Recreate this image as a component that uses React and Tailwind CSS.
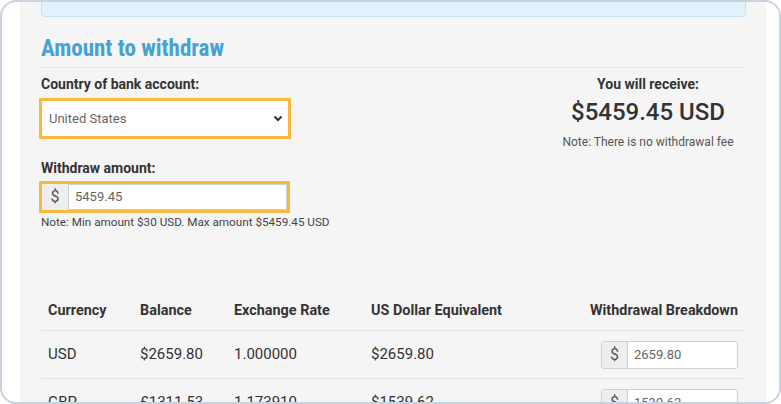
import React from "react";

function MoneyInput({ value, width = "w-[137px]", h = "h-[28px]" }) {
  return (
    <div className={`flex ${width} ${h} rounded-[3px] border border-[#cfcfcf] bg-white overflow-hidden`}>
      <div className="w-[26px] flex items-center justify-center bg-[#eeeeee] border-r border-[#cfcfcf] text-[16px] text-[#555]">$</div>
      <div className="flex-1 flex items-center pl-[6px] text-[13px] text-[#666]">{value}</div>
    </div>
  );
}

export default function App() {
  const rows = [
    ["USD", "$2659.80", "1.000000", "$2659.80", "2659.80"],
    ["GBP", "£1311.53", "1.173910", "$1539.62", "1539.62"],
  ];
  return (
    <div className="w-[781px] h-[404px] bg-white overflow-hidden" style={{ fontFamily: "Roboto, 'Liberation Sans', sans-serif" }}>
      <div className="h-[404px] w-[781px] border-2 border-[#c9d3dd] rounded-[16px] overflow-hidden flex pl-[18px] pr-[13px] bg-white">
        <div className="flex-1 bg-[#f5f5f5] pl-[21px] pr-[20px] flex flex-col">
          <div className="-mt-[28px] h-[43px] shrink-0 rounded-[4px] border border-[#c3e2f4] bg-[#e2f2fc]" />
          <h2
            className="mt-[18px] h-[28px] leading-[28px] text-[23px] font-bold text-[#45a2d3]"
            style={{ fontFamily: "'Roboto Condensed', 'Liberation Sans Narrow', 'DejaVu Sans Condensed', Roboto, sans-serif" }}
          >
            Amount to withdraw
          </h2>
          <div className="mt-[4px] border-t border-[#e8e8e8]" />
          <div className="flex justify-between mt-[6px]">
            <div className="flex flex-col">
              <div className="h-[20px] leading-[20px] text-[14px] font-bold text-[#333]">Country of bank account:</div>
              <div className="mt-[4px] -ml-[2px] w-[252px] h-[41px] border-[3px] border-[#f8b93c] bg-white flex items-center justify-between pl-[7px] pr-[5px]">
                <span className="text-[13px] text-[#666]">United States</span>
                <svg width="10" height="7" viewBox="0 0 10 7"><path d="M1.5 1.5 5 5l3.5-3.5" fill="none" stroke="#333" strokeWidth="2" /></svg>
              </div>
              <div className="mt-[19px] h-[20px] leading-[20px] text-[14px] font-bold text-[#333]">Withdraw amount:</div>
              <div className="mt-[3px] -ml-[2px] w-[251px] h-[32px] border-[3px] border-[#f8b93c] bg-white flex">
                <div className="w-[26px] flex items-center justify-center bg-[#eeeeee] text-[16px] text-[#555]">$</div>
                <div className="flex-1 flex items-center pl-[6px] border border-[#cfcfcf] text-[13px] text-[#666]">5459.45</div>
              </div>
              <div className="mt-[1px] h-[16px] leading-[16px] text-[11.7px] text-[#444]">Note: Min amount $30 USD. Max amount $5459.45 USD</div>
            </div>
            <div className="w-[196px] flex flex-col items-center">
              <div className="h-[20px] leading-[20px] text-[14px] font-bold text-[#333]">You will receive:</div>
              <div className="mt-[3px] h-[30px] leading-[30px] text-[24px] font-medium text-[#333]">$5459.45 USD</div>
              <div className="mt-[7px] h-[16px] leading-[16px] text-[12px] text-[#555]">Note: There is no withdrawal fee</div>
            </div>
          </div>
          <div className="mt-[62px] flex flex-col">
            <div className="grid grid-cols-[92px_94px_137px_1fr_auto] h-[39px] items-center border-b border-[#e4e4e4] text-[14.4px] font-bold text-[#333]">
              <div className="pl-[7px]">Currency</div>
              <div className="pl-[7px]">Balance</div>
              <div className="pl-[7px]">Exchange Rate</div>
              <div className="pl-[7px]">US Dollar Equivalent</div>
              <div className="pr-[8px]">Withdrawal Breakdown</div>
            </div>
            {rows.map((r) => (
              <div key={r[0]} className="grid grid-cols-[92px_94px_137px_1fr_auto] h-[48px] items-center border-b border-[#e4e4e4] text-[15px] text-[#333]">
                <div className="pl-[7px]">{r[0]}</div>
                <div className="pl-[7px]">{r[1]}</div>
                <div className="pl-[7px]">{r[2]}</div>
                <div className="pl-[7px]">{r[3]}</div>
                <div className="pr-[8px]"><MoneyInput value={r[4]} /></div>
              </div>
            ))}
          </div>
        </div>
      </div>
    </div>
  );
}
